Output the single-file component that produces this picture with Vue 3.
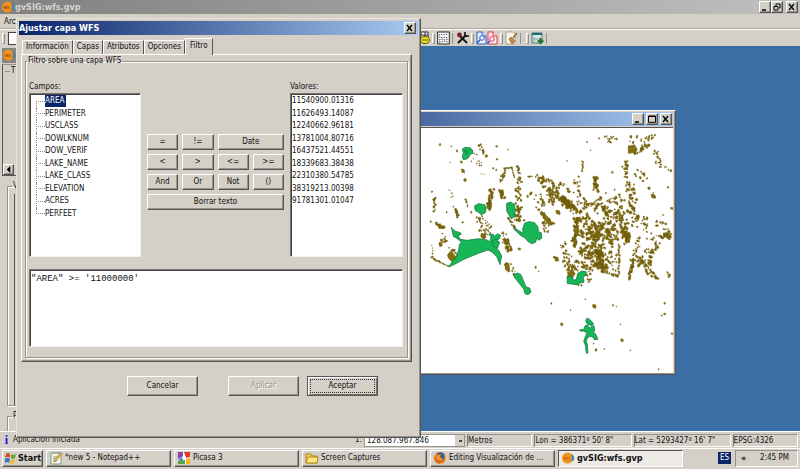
<script setup>
import { ref } from 'vue'

const filter = ref('"AREA" >= \'11000000\'')
const scale = ref('128.087.967.846')
const selected = ref('AREA')
const tabs = ['Información', 'Capas', 'Atributos', 'Opciones', 'Filtro']
const fields = ['AREA', 'PERIMETER', 'USCLASS', 'DOWLKNUM', 'DOW_VERIF', 'LAKE_NAME', 'LAKE_CLASS', 'ELEVATION', 'ACRES', 'PERFEET']
const values = ['11540900.01316', '11626493.14087', '12240662.96181', '13781004.80716', '16437521.44551', '18339683.38438', '22310380.54785', '38319213.00398', '91781301.01047']
const operators = ['=', '!=', 'Date', '<', '>', '<=', '>=', 'And', 'Or', 'Not', '()', 'Borrar texto']
const spans = { Date: 'span-2', 'Borrar texto': 'span-4' }

const insert = (text) => {
  filter.value = text === 'Borrar texto' ? '' : filter.value + ' ' + text
}

// Small lakes are scattered along segments: x1, y1, x2, y2, spread, count, size
const tracks = {
  west: [
    [168, 118, 180, 145, 5, 12, 5], [145, 143, 160, 150, 2, 5, 3], [150, 160, 172, 185, 8, 9, 4],
    [240, 190, 264, 188, 1, 12, 3], [243, 192, 240, 212, 2, 10, 4], [240, 210, 226, 226, 4, 9, 5],
    [263, 188, 271, 216, 1, 12, 3], [280, 182, 286, 206, 3, 10, 5], [285, 225, 284, 300, 8, 26, 6],
    [204, 252, 194, 312, 5, 30, 7], [192, 290, 198, 305, 4, 10, 7], [230, 256, 238, 280, 4, 14, 8],
    [124, 282, 132, 305, 2, 9, 4], [92, 310, 103, 336, 4, 13, 6], [32, 278, 30, 322, 3, 13, 5],
    [38, 358, 58, 370, 4, 13, 7], [62, 400, 48, 424, 5, 12, 6], [24, 420, 26, 454, 1, 5, 4],
    [22, 458, 50, 472, 2, 16, 4], [50, 473, 76, 484, 1, 12, 3], [165, 330, 180, 395, 8, 22, 6],
    [178, 350, 205, 382, 10, 15, 4], [285, 310, 278, 348, 7, 24, 7], [255, 340, 276, 375, 3, 25, 4],
    [244, 402, 258, 436, 5, 26, 6], [246, 475, 252, 496, 4, 12, 7], [264, 482, 272, 516, 4, 10, 4],
    [230, 390, 250, 420, 10, 14, 4], [314, 205, 324, 220, 8, 5, 4], [345, 215, 390, 260, 12, 22, 6],
    [320, 270, 360, 300, 15, 13, 6], [350, 320, 380, 355, 5, 14, 7], [372, 255, 384, 295, 6, 15, 6],
    [360, 350, 370, 380, 7, 12, 5], [70, 260, 86, 275, 6, 5, 3], [78, 432, 100, 445, 5, 8, 5]
  ],
  north: [
    [200, 98, 230, 98, 4, 10, 5], [208, 108, 215, 114, 3, 6, 4], [132, 168, 130, 198, 2, 7, 5],
    [265, 105, 330, 100, 9, 15, 5], [280, 145, 330, 125, 8, 28, 6], [325, 100, 345, 94, 5, 6, 5],
    [350, 145, 362, 182, 7, 19, 5], [380, 185, 396, 200, 3, 4, 5], [262, 165, 260, 220, 4, 19, 6],
    [290, 200, 316, 220, 8, 10, 6], [270, 230, 285, 315, 11, 42, 6], [170, 215, 170, 255, 6, 22, 7],
    [110, 215, 128, 290, 9, 20, 6], [5, 215, 48, 240, 5, 18, 6], [28, 255, 45, 295, 5, 18, 6],
    [45, 262, 85, 298, 8, 34, 7], [75, 285, 105, 318, 9, 44, 7], [55, 235, 95, 260, 10, 13, 6],
    [110, 310, 200, 290, 16, 42, 6], [8, 285, 16, 300, 5, 7, 6], [12, 325, 40, 360, 5, 12, 7],
    [110, 340, 113, 390, 5, 28, 7], [130, 320, 170, 390, 18, 40, 7], [175, 310, 230, 335, 14, 36, 7],
    [190, 350, 170, 415, 9, 38, 7], [222, 330, 205, 415, 12, 44, 7], [250, 320, 262, 410, 13, 54, 7],
    [280, 315, 295, 360, 11, 22, 6], [210, 265, 250, 300, 14, 20, 6], [315, 340, 320, 375, 10, 14, 6],
    [340, 265, 346, 280, 3, 5, 6], [386, 375, 390, 400, 6, 10, 7], [345, 355, 375, 365, 9, 9, 6]
  ],
  south: [
    [70, 38, 90, 100, 10, 24, 5], [110, 5, 105, 45, 6, 22, 8], [135, 0, 185, 35, 17, 42, 8],
    [195, 0, 235, 25, 15, 34, 7], [255, 0, 262, 35, 8, 20, 8], [125, 55, 185, 65, 13, 40, 7],
    [135, 80, 200, 90, 16, 48, 7], [165, 100, 205, 123, 8, 40, 7], [180, 55, 184, 105, 7, 32, 7],
    [115, 98, 155, 120, 10, 24, 6], [195, 125, 238, 138, 3, 14, 5], [240, 45, 238, 140, 2, 24, 5],
    [270, 145, 284, 85, 3, 30, 6], [282, 85, 300, 25, 6, 18, 5], [80, 95, 105, 125, 9, 28, 6],
    [298, 90, 330, 100, 11, 28, 7], [310, 65, 345, 75, 12, 15, 6], [340, 65, 358, 40, 6, 14, 6],
    [325, 120, 355, 145, 6, 19, 6], [370, 25, 392, 8, 6, 18, 7], [388, 130, 392, 140, 3, 6, 5],
    [48, 82, 58, 90, 3, 7, 6], [315, 20, 355, 20, 14, 9, 5], [145, 135, 155, 155, 5, 7, 5],
    [110, 155, 128, 170, 4, 6, 4], [205, 70, 235, 110, 13, 18, 5]
  ]
}

// Isolated lakes: x, y, size
const singles = {
  west: [[48, 119, 6], [82, 124, 3], [99, 138, 5], [187, 153, 7], [219, 163, 6], [218, 124, 5], [252, 133, 3], [78, 172, 2], [112, 171, 6], [208, 190, 5], [217, 195, 5], [117, 198, 9], [123, 225, 8], [172, 206, 2], [180, 208, 2], [24, 260, 6], [30, 285, 6], [142, 322, 5], [68, 322, 4], [116, 352, 5], [20, 350, 4], [55, 386, 4], [68, 408, 6], [178, 394, 13], [286, 432, 8], [262, 434, 7], [335, 487, 6], [344, 499, 3], [382, 596, 3], [300, 346, 6], [190, 432, 5]],
  north: [[144, 111, 5], [180, 100, 5], [155, 136, 3], [84, 168, 3], [220, 202, 5], [250, 185, 5], [330, 250, 7], [387, 247, 6], [398, 310, 7], [342, 274, 13], [57, 322, 13], [372, 330, 5], [312, 228, 6]],
  south: [[37, 220, 3], [139, 208, 3], [95, 241, 3], [68, 283, 7], [166, 229, 9], [222, 226, 5], [232, 230, 3], [377, 220, 5], [377, 252, 6], [368, 257, 4], [244, 283, 3], [249, 331, 7], [171, 360, 7], [196, 357, 3], [274, 361, 3], [399, 311, 6], [359, 418, 4], [164, 341, 4]]
}

let seed = 7321
const random = () => {
  seed = (seed * 16807) % 2147483647
  return seed / 2147483647
}
const blob = (x, y, s) => {
  const w = s * (0.42 + random() * 0.25)
  const h = s * (0.42 + random() * 0.35)
  const k = (random() - 0.5) * s * 0.8
  const p = [[-w, -h * 0.4], [-w * 0.3 + k, -h], [w * 0.7, -h * 0.7], [w, h * 0.3], [w * 0.2 - k, h], [-w * 0.7, h * 0.6]]
  return 'M' + p.map(([a, b]) => `${(x + a).toFixed(1)} ${(y + b).toFixed(1)}`).join('L') + 'Z'
}
const lakes = (name) => {
  const parts = singles[name].map(([x, y, s]) => blob(x, y, s))
  for (const [x1, y1, x2, y2, spread, count, size] of tracks[name]) {
    for (let i = 0; i < count; i++) {
      const t = count > 1 ? i / (count - 1) : 0
      const dx = (random() * 2 - 1) * spread * 1.2
      const dy = (random() * 2 - 1) * spread * 1.2
      parts.push(blob(x1 + (x2 - x1) * t + dx, y1 + (y2 - y1) * t + dy, size * (0.55 + random() * 0.6)))
    }
  }
  return parts.join('')
}
const west = lakes('west')
const north = lakes('north')
const south = lakes('south')
</script>

<template>
  <div class="screen">
    <header class="app-title">
      <svg class="logo" viewBox="0 0 14 14" aria-hidden="true"><circle cx="6.5" cy="7" r="5.5" fill="#f0911c" /><path d="M3 6v2q1 1 2 0V6M6 9V6M8 6v3" fill="none" stroke="#a84f0b" /><path d="M10 3q4 1 3 6l-3 2q2-4 0-8z" fill="#3c83b0" /></svg>
      <strong>gvSIG:wfs.gvp</strong>
      <div class="controls">
        <button class="win-btn" aria-label="Minimizar"><svg viewBox="0 0 10 8"><path d="M2 7h4" stroke="#000" stroke-width="1.5" /></svg></button>
        <button class="win-btn" aria-label="Restaurar"><svg viewBox="0 0 10 8"><path d="M4 3V1h4v4H7M2 3.5h4V7H2z" fill="none" stroke="#000" /></svg></button>
        <button class="win-btn spaced" aria-label="Cerrar"><svg viewBox="0 0 10 8"><path d="M2 1l5 6M7 1L2 7" stroke="#000" stroke-width="1.3" /></svg></button>
      </div>
    </header>
    <nav class="menu"><a href="#archivo">Arc</a></nav>
    <div class="toolbar">
      <i class="grip"></i><i class="blank"></i>
      <div class="tools">
        <svg viewBox="0 0 13 14"><path d="M1 1h10v6H1zM1 4h10M4 1v6M8 1v6" fill="#fff" stroke="#333" /><ellipse cx="8" cy="9" rx="4.5" ry="3.5" fill="#f5e51d" stroke="#5b5508" /><path d="M5 9h6" stroke="#5b5508" /></svg>
        <i class="grip"></i>
        <svg viewBox="0 0 13 14"><path d="M.7 1h11.6v12H.7z" fill="#fff" stroke="#222" /><path d="M2 4l2-1 2 1 2-1 3 1M2 6h2l1 1 3-1 3 1M2 9l3-1 2 1 4-1M2 11h3l2-1 4 1" fill="none" stroke="#444" stroke-dasharray="1.5 1" /></svg>
        <i class="line"></i>
        <svg viewBox="0 0 13 14"><path d="M2 12l8-8" stroke="#111" stroke-width="2.2" /><path d="M9 1v4h4" fill="none" stroke="#111" stroke-width="1.6" /><path d="M4 5l7 7" stroke="#111" stroke-width="1.8" /><circle cx="3.5" cy="4" r="2.4" fill="#72222b" /></svg>
        <i class="grip"></i>
        <svg class="wide" viewBox="0 0 22 14"><g fill="#e7efff" stroke="#315cc7"><path d="M1 1h5l4 4v8H1z" /><path d="M6 1v4h4" /><circle cx="6" cy="7" r="2.3" /><path d="M4 9l-3 3" stroke-width="1.6" /></g><g fill="#ffecef" stroke="#e13d52"><path d="M12 1h5l4 4v8h-9z" /><path d="M17 1v4h4" /><circle cx="16" cy="8" r="2.3" /><path d="M14 10l-3 3" stroke="#3c61c4" stroke-width="1.6" /></g></svg>
        <i class="grip"></i>
        <svg viewBox="0 0 13 14"><path d="M1 1h7l2 2v10H1z" fill="#f7f2e7" stroke="#b9a385" /><path d="M12 2L8 7" stroke="#9a6933" stroke-width="1.5" /><path d="M4 8l2-2 4 4-3 3z" fill="#c28a49" stroke="#83592a" stroke-width=".6" /></svg>
        <i class="line"></i><i class="grip gap"></i>
        <svg viewBox="0 0 13 14"><path d="M1 2h10v10H1z" fill="#d6e7e0" stroke="#487a78" /><path d="M1 2h10v2H1z" fill="#276877" /><path d="M3 6v5M3 8h4" stroke="#82a3a0" /><path d="M9.5 7v6M6.5 10h6" stroke="#28733b" stroke-width="2.4" /></svg>
        <i class="line"></i>
      </div>
    </div>

    <main class="workspace">
      <aside class="project">
        <div class="project-title"><svg class="logo" viewBox="0 0 14 14" aria-hidden="true"><circle cx="6.5" cy="7" r="5.5" fill="#f0911c" /><path d="M3 6v2q1 1 2 0V6M6 9V6M8 6v3" fill="none" stroke="#a84f0b" /><path d="M10 3q4 1 3 6l-3 2q2-4 0-8z" fill="#3c83b0" /></svg></div>
        <div class="project-view"><fieldset><legend>T</legend></fieldset><button class="scroll" aria-label="Desplazar"><svg viewBox="0 0 10 10"><path d="M7 1v8L3 5z" /></svg></button></div>
        <fieldset class="group grow"><legend>V</legend><div class="inner"></div></fieldset>
        <fieldset class="group foot"><legend>P</legend></fieldset>
      </aside>

      <section class="map-window" aria-label="Vista">
        <div class="map-title">
          <button class="win-btn" aria-label="Minimizar"><svg viewBox="0 0 10 8"><path d="M2 7h4" stroke="#000" stroke-width="1.5" /></svg></button>
          <button class="win-btn" aria-label="Maximizar"><svg viewBox="0 0 10 8"><path d="M1.5 1h7v6.3h-7zM1.5 1.5h7" fill="none" stroke="#000" /></svg></button>
          <button class="win-btn" aria-label="Cerrar"><svg viewBox="0 0 10 8"><path d="M2 1l5 6M7 1L2 7" stroke="#000" stroke-width="1.4" /></svg></button>
        </div>
        <div class="map">
          <svg viewBox="1263 384 759 735" role="img" aria-label="Lagos">
            <g class="lake" transform="translate(1275 315)">
              <path :d="west" />
              <path d="M77 440l8 2 8 10 6 4-5 10-12 3-9-9-3-10z" />
              <path d="M357 325l10 12 16 22-10-3-15-17z" />
              <path d="M244 476l10-2 3 14-6 10-8-8z" />
            </g>
            <g class="lake" transform="translate(1620 315)"><path :d="north" /><path d="M267 123l20-4 8 14-5 8-22 5z" /><path d="M12 322l14 15 14 24-10-2-18-20z" /></g>
            <g class="lake" transform="translate(1620 690)"><path :d="south" /><path d="M85 125l18-3 6 9-7 10H87z" /></g>
            <g class="big" transform="translate(1275 315)">
              <path d="M115 132l8-5 15 1 8 7 1 10-10 4-2 8-9 6-8 1-3-8 3-12zM122 137l7-2 3 8-6 4z" />
              <path d="M152 302l12-6 18 3 5 9-3 15-12 6-9-7-10-6z" />
              <path d="M248 295l12-4 11 7 3 16-2 20-10 8-6-10-8-14z" />
              <path d="M302 354l14-4 16 3 10 13 1 14 9 3 1 17-9 6-5-8-4 14-12 4-12-7-8-10-14-8-12-12-8-12 14 9 14 9-1-14z" />
              <path d="M82 367l10 11 17 5 3 5-10 4 7 11 20 3 34-5 26 4 9 5 3-15-6-6 12-2 4 7 9-8 10 5-4 11-9 3 10 7-6 7-3 12 7 6 8 16-5 26-9-23-14-14-13-7-24 8-48 20-28 15-18 8 13-20 9-8 8-23 2-16 6-8-12-10-12-7z" />
              <path d="M205 407l12-5 9 12-6 16-13-7z" />
              <path d="M270 508l11-4 10 5 6 15 9 22 11 3 4 12-9 8-9-3-4-14-15-19-12-16z" />
            </g>
            <g class="big" transform="translate(1620 690)">
              <path d="M84 139l17 2 3 10 8-3 4-18 12-7 14 2-1 9-8 8 2 15-12 2-8 6-16-3-14-1z" />
              <path d="M144 264l9 5 11 12-5 6-14-4-5-11zM121 300l15-3 2-10 8-1 6 7 13-6 2 14-3 7 6 4 7 16-11 1-5-9-9-1-8 7-2 11 3 5 2 27-5 1-3-24-5-12 6-17 4-8-10-6-8 1z" />
            </g>
          </svg>
        </div>
      </section>
    </main>

    <footer class="status">
      <span class="info">i</span><span class="message">Aplicación iniciada</span>
      <label for="scale">1:</label>
      <select id="scale" v-model="scale"><option>128.087.967.846</option></select>
      <span class="cell units">Metros</span><span class="cell">Lon = 386371º 50' 8"</span><span class="cell">Lat = 5293427º 16' 7"</span><span class="cell units">EPSG:4326</span>
    </footer>

    <nav class="taskbar">
      <button class="start"><svg viewBox="0 0 12 12"><path d="M1 2q2-2 4 0v4Q3 4 0 6z" fill="#dc4b28" /><path d="M6 2q2 2 5 0l-1 4q-2 2-4 0z" fill="#65a934" /><path d="M0 7q3-2 5 0l-1 4q-2-2-4 0z" fill="#3471ca" /><path d="M6 7q2 2 4 0l-1 4q-2 2-4 0z" fill="#efbd26" /></svg><b>Start</b></button>
      <button class="task"><svg viewBox="0 0 14 14"><path d="M2 2h10v11H2z" fill="#f6f6e9" stroke="#819c88" /><path d="M3 2h8M4 6h6M4 8h5M4 10h4" stroke="#7fae9a" /><path d="M13 3l-6 7-2 1 1-3 5-6z" fill="#f0bc35" stroke="#8e6b1f" stroke-width=".5" /></svg><span>*new 5 - Notepad++</span></button>
      <button class="task"><svg viewBox="0 0 14 14"><path d="M1 1h12v12H1z" fill="#fff" /><path d="M1 1h5v4L1 8z" fill="#8d3fae" /><path d="M7 1h6v5L9 7z" fill="#e33c2c" /><path d="M13 7v6H9V8z" fill="#f2b61f" /><path d="M8 9v4H1v-3z" fill="#54a938" /><path d="M1 9l5-4 2 3-4 2z" fill="#347fd3" /><circle cx="7" cy="7" r="2" fill="#fff" /></svg><span>Picasa 3</span></button>
      <button class="task"><svg viewBox="0 0 14 14"><path d="M1 3h5l1 2h5v7H1z" fill="#f5cb45" stroke="#b28921" /><path d="M3 6h10l-1 6H1z" fill="#ffe780" stroke="#b28921" /></svg><span>Screen Captures</span></button>
      <button class="task"><svg viewBox="0 0 14 14"><circle cx="7" cy="7" r="6" fill="#e56b17" /><circle cx="7.5" cy="5.5" r="4" fill="#325ca0" /><path d="M2 3l3 1 3-1-1 3 3 2q-1 3-5 1-3-2-3-6z" fill="#f39020" /><path d="M12 4q2 7-5 9" fill="none" stroke="#f7bd35" /></svg><span>Editing Visualización de ...</span></button>
      <button class="task active"><svg viewBox="0 0 14 14"><circle cx="6.5" cy="7" r="5.5" fill="#f0911c" /><path d="M3 6v2q1 1 2 0V6M6 9V6M8 6v3" fill="none" stroke="#c46a10" /><path d="M10 3q4 1 3 6l-3 2q2-4 0-8z" fill="#3c83b0" /></svg><b>gvSIG:wfs.gvp</b></button>
      <span class="lang">ES</span>
      <div class="tray"><b>«</b><time>2:45 PM</time></div>
    </nav>

    <section class="dialog" role="dialog" aria-labelledby="dialog-title">
      <header class="dialog-title"><strong id="dialog-title">Ajustar capa WFS</strong><button class="win-btn" aria-label="Cerrar"><svg viewBox="0 0 10 8"><path d="M2 1l5 6M7 1L2 7" stroke="#000" stroke-width="1.4" /></svg></button></header>
      <div class="tabs" role="tablist">
        <button v-for="tab in tabs" :key="tab" role="tab" :aria-selected="tab === 'Filtro'" :class="{ current: tab === 'Filtro' }">{{ tab }}</button>
      </div>
      <div class="panel">
        <fieldset class="filter">
          <legend>Filtro sobre una capa WFS</legend>
          <div class="columns">
            <div class="column">
              <span id="fields-label">Campos:</span>
              <div class="list">
                <ul class="tree" role="listbox" aria-labelledby="fields-label"><li v-for="field in fields" :key="field" role="option" :aria-selected="field === selected" @click="selected = field"><span :class="{ selected: field === selected }">{{ field }}</span></li></ul>
              </div>
            </div>
            <div class="operators"><button v-for="op in operators" :key="op" :class="spans[op]" @click="insert(op)">{{ op }}</button></div>
            <div class="column">
              <span id="values-label">Valores:</span>
              <div class="list"><ul class="values" role="listbox" aria-labelledby="values-label"><li v-for="value in values" :key="value" role="option">{{ value }}</li></ul></div>
            </div>
          </div>
          <textarea v-model="filter" aria-label="Filtro" spellcheck="false"></textarea>
        </fieldset>
      </div>
      <div class="actions"><button>Cancelar</button><button class="apply" disabled>Aplicar</button><button class="default"><span>Aceptar</span></button></div>
    </section>
  </div>
</template>

<style>
body { margin: 0; background: #3a6ea5; }
</style>

<style scoped>
* { box-sizing: border-box; }
.screen { position: relative; display: flex; flex-direction: column; min-height: 100vh; overflow: hidden; background: #d4d0c8; color: #111; font: 8px/12px "DejaVu Sans Condensed", "DejaVu Sans", sans-serif; }
button, select, textarea { font: inherit; color: inherit; margin: 0; border-radius: 0; }
button { padding: 0; background: #d4d0c8; border: 1px solid; border-color: #fff #555 #555 #fff; box-shadow: inset -1px -1px #96938d; }
strong, b { font-size: 9px; font-weight: 700; }
fieldset { min-width: 0; margin: 0; padding: 0; border: 1px solid #96938d; box-shadow: inset 1px 1px #fff, 1px 1px #fff; }
legend { padding: 0 1px; line-height: 10px; }
ul { margin: 0; padding: 0; list-style: none; }
svg { display: block; }
.app-title { display: flex; align-items: center; height: 14px; padding: 0 2px 0 1px; background: linear-gradient(90deg, #808080, #c0c0c0); color: #d6d3ce; }
.app-title strong { flex: 1; }
.logo { width: 14px; height: 14px; }
.controls { display: flex; }
.win-btn { width: 12px; height: 12px; }
.win-btn svg { width: 10px; height: 8px; margin: auto; }
.win-btn.spaced { margin-left: 3px; }
.menu { height: 15px; padding: 2px 0 0 4px; border-bottom: 1px solid #aaa69e; }
.menu a { display: block; width: 12px; overflow: hidden; color: inherit; text-decoration: none; }
.toolbar { display: flex; align-items: center; height: 17px; padding-left: 2px; border-top: 1px solid #fff; }
.grip, .line { width: 3px; height: 11px; border: 1px solid; border-color: #fff #96938d #96938d #fff; }
.line { width: 2px; border-width: 0 0 0 1px; border-color: #96938d; }
.blank { width: 12px; height: 13px; margin-left: 3px; background: #fff; border: 1px solid #444; }
.tools { display: flex; align-items: center; gap: 2px; margin-left: 397px; }
.tools svg { width: 13px; height: 14px; }
.tools .wide { width: 22px; }
.tools .gap { margin-left: 2px; }
.workspace { position: relative; display: flex; flex: 1; background: #3a6ea5; }
.project { display: flex; flex-direction: column; width: 200px; padding: 2px 0 0 2px; background: #d4d0c8; }
.project-title { height: 15px; background: #858585; }
.project-view { display: flex; flex-direction: column; height: 112px; margin-top: 1px; border: 1px solid #555; border-top-color: #96938d; }
.project-view fieldset { flex: 1; margin: 1px 4px 0 2px; border-width: 1px 0 0; box-shadow: none; }
.project-view legend { margin-left: 5px; }
.scroll { width: 11px; height: 11px; }
.scroll svg { width: 9px; height: 9px; }
.group { margin: 5px 8px 0 5px; padding: 3px 3px 0 6px; }
.group legend { margin-left: -2px; }
.grow { display: flex; flex-direction: column; flex: 1; }
.inner { flex: 1; border-left: 1px solid #555; }
.foot { height: 20px; border-bottom: 0; }
.map-window { position: absolute; left: 240px; top: 64px; width: 436px; border: 1px solid; border-color: #fff #555 #555 #fff; box-shadow: inset -1px -1px #96938d; background: #d4d0c8; padding: 1px 2px 1px; }
.map-title { display: flex; align-items: center; justify-content: flex-end; gap: 2px; height: 14px; padding-right: 1px; background: linear-gradient(90deg, #0a246a, #a6caf0); }
.map { margin-top: 1px; background: #fff; border-top: 1px solid #555; }
.map svg { width: 253px; height: 245px; margin-left: auto; }
.lake { fill: #85700f; stroke: #6b570b; stroke-width: 1; }
.big { fill: #17b657; stroke: #0b6a37; stroke-width: 2; }
.status { display: flex; align-items: center; height: 17px; padding: 1px 2px; gap: 2px; border-top: 1px solid #fff; }
.info { width: 9px; color: #1515da; font: bold 12px/14px "Liberation Serif", serif; text-align: center; }
.message { width: 340px; }
.status select { appearance: none; width: 101px; height: 13px; padding: 0 2px; border: 1px solid #96938d; background: linear-gradient(#444, #444) 94px 5px / 3px 2px no-repeat, linear-gradient(#d4d0c8, #d4d0c8) 90px 0 / 10px 11px no-repeat, #fff; line-height: 11px; }
.cell { flex: 3; height: 13px; border: 1px solid; border-color: #96938d #fff #fff #777; white-space: nowrap; }
.cell.units { flex: 2; }
.taskbar { display: flex; align-items: center; height: 21px; padding: 0 2px 2px; gap: 3px; border-top: 1px solid #fff; }
.taskbar button { display: flex; align-items: center; height: 17px; overflow: hidden; white-space: nowrap; }
.start { width: 41px; padding-left: 2px; gap: 1px; }
.start svg { width: 12px; height: 12px; flex: none; }
.task { flex: 0 1 125px; padding-left: 2px; gap: 2px; }
.task svg { width: 14px; height: 14px; flex: none; }
.taskbar .active { background: #edeae5; border-color: #555 #fff #fff #555; box-shadow: none; }
.lang { margin-left: auto; width: 13px; background: #0a246a; color: #fff; text-align: center; }
.tray { display: flex; align-items: center; justify-content: space-between; width: 63px; height: 17px; padding: 0 8px 0 5px; margin-left: 1px; border: 1px solid; border-color: #96938d #fff #fff #96938d; }
.dialog { position: absolute; left: 16px; top: 18px; width: 405px; padding: 2px 2px 41px; background: #d4d0c8; border: 1px solid; border-color: #e8e5df #555 #555 #e8e5df; box-shadow: inset -1px -1px #96938d; }
.dialog-title { display: flex; align-items: center; justify-content: space-between; height: 14px; padding: 0 2px 0 0; background: linear-gradient(90deg, #0a246a, #a6caf0); color: #fff; }
.tabs { display: flex; align-items: flex-end; height: 19px; padding-left: 3px; }
.tabs button { height: 14px; padding: 0 3px 1px; border-bottom: 0; box-shadow: none; border-right-width: 1px; }
.tabs .current { height: 17px; padding: 0 4px 2px; margin-bottom: -1px; position: relative; }
.panel { margin: 0 6px 0 2px; padding: 1px 3px 3px; border: 1px solid; border-color: #fff #555 #555 #fff; box-shadow: inset -1px -1px #96938d; }
.filter { padding: 15px 4px 10px 3px; }
.filter legend { margin-left: -2px; }
.columns { display: grid; grid-template-columns: 112px 1fr 113px; column-gap: 6px; }
.column { display: flex; flex-direction: column; }
.list { height: 164px; background: #fff; border: 1px solid; border-color: #77746e #f4f2ee #f4f2ee #77746e; box-shadow: inset 1px 1px #444; padding: 1px 1px; }
.tree { display: grid; grid-template-rows: repeat(10, 1fr); height: 125px; margin-left: 5px; }
.tree li { display: flex; align-items: center; position: relative; }
.tree li::before { content: ""; width: 9px; border-top: 1px dotted #888; }
.tree li::after { content: ""; position: absolute; left: 0; top: 0; bottom: 0; border-left: 1px dotted #888; }
.tree li:first-child::after { top: 50%; }
.tree li:last-child::after { bottom: 50%; }
.tree .selected { padding-right: 2px; background: #0a246a; color: #fff; }
.values { display: grid; grid-template-rows: repeat(9, 1fr); height: 113px; }
.operators { display: grid; grid-template-columns: repeat(4, 1fr); grid-auto-rows: 16px; gap: 4px; align-content: start; padding-top: 53px; }
.operators button { line-height: 12px; }
.span-2 { grid-column: span 2; }
.span-4 { grid-column: span 4; }
textarea { display: block; width: 100%; height: 78px; margin-top: 12px; padding: 3px 1px; resize: none; border: 1px solid; border-color: #77746e #f4f2ee #f4f2ee #77746e; box-shadow: inset 1px 1px #444; background: #fff; outline: none; }
.filter textarea { font: 9px/12px "Liberation Mono", monospace; }
.actions { display: flex; justify-content: flex-end; gap: 8px; padding: 14px 40px 0 0; }
.actions button { width: 71px; height: 20px; }
.actions button:first-child { margin-right: 22px; }
.actions .apply { color: #96938d; text-shadow: 1px 1px #fff; }
.actions .default { border-color: #555; padding: 1px; box-shadow: inset 1px 1px #fff, inset -1px -1px #77746e; }
.default span { display: block; margin: 1px; border: 1px dotted #333; }
</style>
